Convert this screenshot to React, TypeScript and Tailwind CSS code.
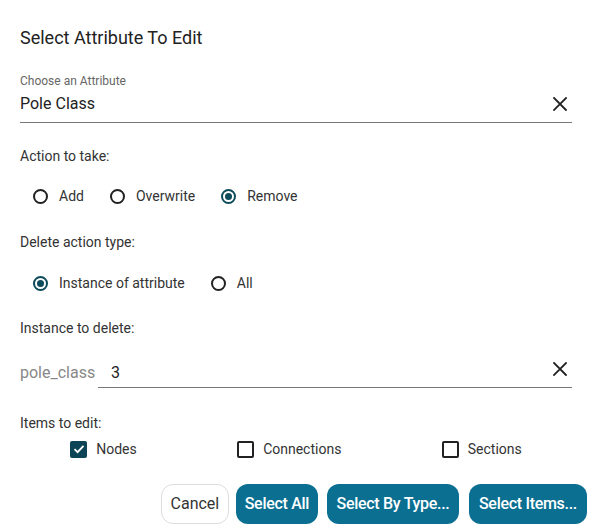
import { useState } from "react";

type RadioOption = { value: string; label: string };

function CloseIcon() {
  return (
    <svg width="14" height="14" viewBox="0 0 14 14" fill="none">
      <path d="M1 1L13 13M13 1L1 13" stroke="#222" strokeWidth="1.8" strokeLinecap="square" />
    </svg>
  );
}

function RadioGroup({
  options,
  value,
  onChange,
}: {
  options: RadioOption[];
  value: string;
  onChange: (v: string) => void;
}) {
  return (
    <div className="flex items-center pl-[13px]">
      {options.map((opt) => {
        const checked = opt.value === value;
        return (
          <button
            key={opt.value}
            type="button"
            onClick={() => onChange(opt.value)}
            className="mr-[26px] flex items-center gap-[11px] text-[14px] text-[#333]"
          >
            <span
              className={[
                "flex h-[15px] w-[15px] items-center justify-center rounded-full border-2",
                checked ? "border-[#0d4b5b]" : "border-[#222]",
              ].join(" ")}
            >
              {checked && <span className="h-[7px] w-[7px] rounded-full bg-[#0d4b5b]" />}
            </span>
            {opt.label}
          </button>
        );
      })}
    </div>
  );
}

function Checkbox({
  label,
  checked,
  onToggle,
}: {
  label: string;
  checked: boolean;
  onToggle: () => void;
}) {
  return (
    <button type="button" onClick={onToggle} className="flex items-center gap-[9px] text-[14px] text-[#333]">
      <span
        className={[
          "flex h-[17px] w-[17px] items-center justify-center rounded-[2px]",
          checked ? "bg-[#0d4556]" : "border-2 border-[#222]",
        ].join(" ")}
      >
        {checked && (
          <svg width="12" height="12" viewBox="0 0 12 12" fill="none">
            <path d="M1.5 6.2L4.6 9.2L10.5 2.8" stroke="white" strokeWidth="1.8" />
          </svg>
        )}
      </span>
      {label}
    </button>
  );
}

export default function App() {
  const [action, setAction] = useState("remove");
  const [deleteType, setDeleteType] = useState("instance");
  const [items, setItems] = useState({ nodes: true, connections: false, sections: false });

  return (
    <div
      className="h-[530px] w-[592px] bg-white px-5 pt-[26px]"
      style={{ fontFamily: "Roboto, 'Liberation Sans', sans-serif" }}
    >
      <h2 className="text-[18px] leading-6 text-[#222]">Select Attribute To Edit</h2>

      {/* attribute picker */}
      <div className="mt-[24px] border-b border-[#777]">
        <div className="text-[12px] leading-[14px] text-[#666]">Choose an Attribute</div>
        <div className="flex h-[34px] items-center justify-between pb-[2px] pr-[5px]">
          <span className="text-[16px] text-[#222]">Pole Class</span>
          <CloseIcon />
        </div>
      </div>

      <div className="mt-[23px] text-[14px] leading-5 text-[#333]">Action to take:</div>
      <div className="mt-[20px]">
        <RadioGroup
          value={action}
          onChange={setAction}
          options={[
            { value: "add", label: "Add" },
            { value: "overwrite", label: "Overwrite" },
            { value: "remove", label: "Remove" },
          ]}
        />
      </div>

      <div className="mt-[25px] text-[14px] leading-5 text-[#333]">Delete action type:</div>
      <div className="mt-[21px]">
        <RadioGroup
          value={deleteType}
          onChange={setDeleteType}
          options={[
            { value: "instance", label: "Instance of attribute" },
            { value: "all", label: "All" },
          ]}
        />
      </div>

      <div className="mt-[24px] text-[14px] leading-5 text-[#333]">Instance to delete:</div>
      <div className="mt-[20px] flex h-[30px] items-center">
        <span className="w-[78px] text-[16px] text-[#888]">pole_class</span>
        <div className="flex h-[30px] flex-1 items-center justify-between border-b border-[#777] pl-[13px] pr-[5px]">
          <span className="text-[16px] text-[#222]">3</span>
          <span className="-mt-[8px]">
            <CloseIcon />
          </span>
        </div>
      </div>

      <div className="mt-[25px] text-[14px] leading-5 text-[#333]">Items to edit:</div>
      <div className="mt-[6px] flex h-[20px] items-center justify-around">
        <Checkbox label="Nodes" checked={items.nodes} onToggle={() => setItems({ ...items, nodes: !items.nodes })} />
        <Checkbox
          label="Connections"
          checked={items.connections}
          onToggle={() => setItems({ ...items, connections: !items.connections })}
        />
        <Checkbox
          label="Sections"
          checked={items.sections}
          onToggle={() => setItems({ ...items, sections: !items.sections })}
        />
      </div>

      {/* footer actions */}
      <div className="-mr-[15px] mt-[25px] flex justify-end gap-[7px] text-[16px]">
        <button className="h-[40px] rounded-[12px] border border-[#ddd] bg-white px-[8.5px] text-[#333]">Cancel</button>
        <button className="h-[40px] rounded-[12px] bg-[#0b6f92] px-[9px] font-medium tracking-[-0.3px] text-white">
          Select All
        </button>
        <button className="ml-[2px] h-[40px] rounded-[12px] bg-[#0b6f92] px-[9.5px] font-medium tracking-[-0.3px] text-white">
          Select By Type...
        </button>
        <button className="ml-[3px] h-[40px] rounded-[12px] bg-[#0b6f92] px-[10px] font-medium tracking-[-0.3px] text-white">
          Select Items...
        </button>
      </div>
    </div>
  );
}
